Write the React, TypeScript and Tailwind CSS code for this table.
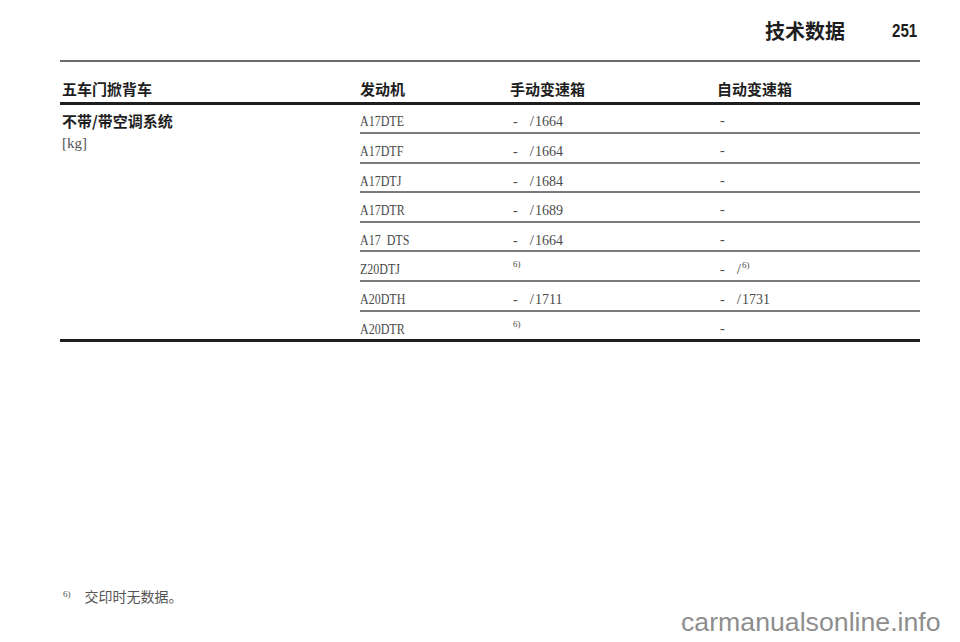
import React from "react";

function Sup() {
  return <span className="relative -top-[6px] text-[9px] leading-none">6)</span>;
}

function Val({ n, sup }: { n?: string; sup?: boolean }) {
  return (
    <span className="inline-flex items-baseline whitespace-pre">
      <span className="inline-block w-[12px]">-</span>
      <span className="inline-block w-[10px] text-right text-[15px] pr-[1px]">/</span>
      {n ? <span>{n}</span> : null}
      {sup ? <Sup /> : null}
    </span>
  );
}

const data = [
  { code: "A17DTE", manual: <Val n="1664" />, auto: "-" },
  { code: "A17DTF", manual: <Val n="1664" />, auto: "-" },
  { code: "A17DTJ", manual: <Val n="1684" />, auto: "-" },
  { code: "A17DTR", manual: <Val n="1689" />, auto: "-" },
  { code: "A17  DTS", manual: <Val n="1664" />, auto: "-" },
  { code: "Z20DTJ", manual: <Sup />, auto: <Val sup /> },
  { code: "A20DTH", manual: <Val n="1711" />, auto: <Val n="1731" /> },
  { code: "A20DTR", manual: <Sup />, auto: "-" },
];

export default function App() {
  return (
    <div className="relative w-[960px] h-[642px] bg-white overflow-hidden flex flex-col pl-[60px] pr-[40px] text-[#222] font-['Noto_Sans_CJK_SC',sans-serif]">
      <header className="h-[62px] border-b-2 border-[#6a6a6a] flex items-end justify-end pb-[19px] pr-[2px] gap-[47px]">
        <span className="text-[20px] font-bold leading-[20px] text-[#1e1e1e]">技术数据</span>
        <span className="inline-block w-[26px] text-[18px] font-bold leading-[20px] text-[#1e1e1e] font-['Liberation_Sans',sans-serif]">
          <span className="inline-block scale-x-[0.84] origin-left">251</span>
        </span>
      </header>

      <div className="h-[43px] border-b-[3px] border-[#1e1e1e] grid grid-cols-[300px_150px_205px_1fr] items-end pb-[4px] text-[15px] font-bold leading-[18px] text-[#1e1e1e]">
        <div className="pl-[2px]">五车门掀背车</div>
        <div>发动机</div>
        <div>手动变速箱</div>
        <div className="pl-[2px]">自动变速箱</div>
      </div>

      <div className="flex border-b-[3px] border-[#1e1e1e]">
        <div className="w-[300px] pl-[2px] pt-[6px]">
          <div className="text-[15px] font-bold leading-[20px] text-[#1e1e1e]">不带/带空调系统</div>
          <div className="mt-[2px] text-[15px] leading-[20px] text-[#555] font-['Liberation_Serif',serif]">[kg]</div>
        </div>
        <div className="flex-1 flex flex-col text-[14px] leading-[18px] text-[#4a4a4a] font-['Liberation_Serif','Noto_Sans_CJK_SC',serif]">
          {data.map((r, i) => (
            <div
              key={r.code}
              className={
                i === 0
                  ? "h-[27px] pt-[7px] grid grid-cols-[150px_205px_1fr]"
                  : "h-[29.6px] pt-[8px] border-t-2 border-[#7a7a7a] grid grid-cols-[150px_205px_1fr]"
              }
            >
              <div>
                <span className="inline-block whitespace-pre text-[15px] scale-x-[0.8] origin-left">{r.code}</span>
              </div>
              <div className="pl-[3px]">{r.manual}</div>
              <div className="pl-[5px]">{r.auto}</div>
            </div>
          ))}
        </div>
      </div>

      <div className="mt-auto mb-[36px] flex items-start pl-[3px] text-[#555]">
        <span className="text-[9px] leading-none pt-[4px] font-['Liberation_Serif',serif]">6)</span>
        <span className="ml-[14px] text-[14px] leading-[20px] font-['Noto_Sans_CJK_SC',serif]">交印时无数据。</span>
      </div>

      <div className="absolute left-[681px] top-[609px] text-[26.7px] leading-none text-[#8e8e8e] font-['Liberation_Sans',sans-serif]">
        carmanualsonline.info
      </div>
    </div>
  );
}
